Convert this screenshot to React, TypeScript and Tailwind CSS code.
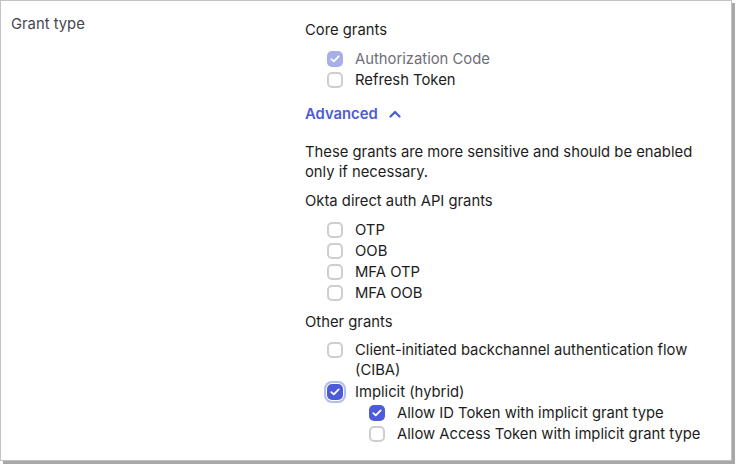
import React from "react";

type Box = "off" | "on" | "disabled-on";

function Checkbox({ state, focused }: { state: Box; focused?: boolean }) {
  if (state === "off") {
    return (
      <span className="mt-[2px] block h-4 w-4 shrink-0 rounded-[5px] border-2 border-[#cdcdd2] bg-white" />
    );
  }
  const bg = state === "on" ? "bg-[#4c5bd7]" : "bg-[#a6afea]";
  return (
    <span
      className={`mt-[2px] flex h-4 w-4 shrink-0 items-center justify-center rounded-[5px] ${bg} ${
        focused ? "shadow-[0_0_0_1px_#ffffff,0_0_0_3px_#b4bcf0]" : ""
      }`}
    >
      <svg width="10" height="8" viewBox="0 0 10 8" fill="none">
        <path d="M1.3 4.1 3.8 6.4 8.7 1.4" stroke="white" strokeWidth="1.8" strokeLinecap="round" strokeLinejoin="round" />
      </svg>
    </span>
  );
}

function Row({
  label,
  state = "off",
  focused,
  disabled,
}: {
  label: string;
  state?: Box;
  focused?: boolean;
  disabled?: boolean;
}) {
  return (
    <label className="flex items-start gap-3">
      <Checkbox state={state} focused={focused} />
      <span className={disabled ? "text-[#6e6e78]" : "text-[#1d1d21]"}>{label}</span>
    </label>
  );
}

export default function App() {
  return (
    <div
      className="h-[468px] w-[739px] overflow-hidden bg-white text-[14.8px] leading-[20px] text-[#1d1d21]"
      style={{ fontFamily: "Inter, 'Noto Sans', sans-serif" }}
    >
      <div className="flex h-[461px] w-[732px] border border-[#c2c2c2] bg-white shadow-[3px_3px_0_#a8a8a8]">
        {/* Label column */}
        <div className="w-[304px] shrink-0 pl-[10px] pt-[13px] text-[#46464e]">Grant type</div>

        {/* Fields column */}
        <div className="w-[410px] pt-[19px]">
          <p>Core grants</p>
          <div className="mt-[9px] flex flex-col gap-px pl-[22px]">
            <Row label="Authorization Code" state="disabled-on" disabled />
            <Row label="Refresh Token" />
          </div>

          <button className="mt-[14px] flex items-center gap-[11px] font-semibold text-[#4c5bd7]">
            Advanced
            <svg width="12" height="8" viewBox="0 0 12 8" fill="none">
              <path d="M1.5 6.5 6 2 10.5 6.5" stroke="currentColor" strokeWidth="2.2" strokeLinecap="round" strokeLinejoin="round" />
            </svg>
          </button>

          <p className="mt-[18px]">
            These grants are more sensitive and should be enabled only if necessary.
          </p>

          <p className="mt-[9px]">Okta direct auth API grants</p>
          <div className="mt-[9px] flex flex-col gap-px pl-[22px]">
            <Row label="OTP" />
            <Row label="OOB" />
            <Row label="MFA OTP" />
            <Row label="MFA OOB" />
          </div>

          <p className="mt-[9px]">Other grants</p>
          <div className="mt-[8px] flex flex-col gap-px pl-[22px]">
            <Row label="Client-initiated backchannel authentication flow (CIBA)" />
            <div className="mt-px">
              <Row label="Implicit (hybrid)" state="on" focused />
            </div>
            <div className="flex flex-col gap-px pl-[42px]">
              <Row label="Allow ID Token with implicit grant type" state="on" />
              <Row label="Allow Access Token with implicit grant type" />
            </div>
          </div>
        </div>
      </div>
    </div>
  );
}
